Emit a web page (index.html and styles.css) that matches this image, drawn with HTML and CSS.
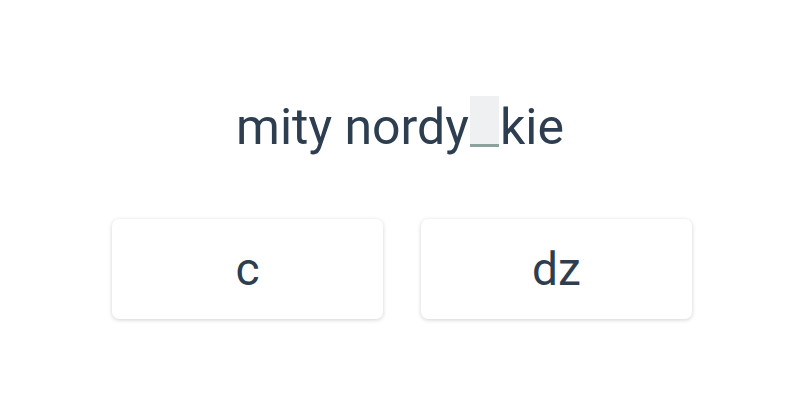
FILE: index.html
```html
<!DOCTYPE html>
<html>
<head>
<meta charset="utf-8">
<link rel="stylesheet" href="styles.css">
</head>
<body>
<div class="app">
  <h1 class="word">mity nordy<span class="blank"></span>kie</h1>
  <div class="options">
    <button class="option">c</button>
    <button class="option">dz</button>
  </div>
</div>
</body>
</html>
```
FILE: styles.css
```css
html, body {
  margin: 0;
  padding: 0;
  background: #ffffff;
}
.app {
  width: 800px;
  height: 400px;
  font-family: Roboto, "Noto Sans", sans-serif;
  color: #2c3e50;
  display: flex;
  flex-direction: column;
  align-items: center;
  padding-top: 96px;
  box-sizing: border-box;
}
.word {
  margin: 0;
  font-size: 50px;
  font-weight: 400;
  line-height: 60px;
  height: 60px;
  white-space: nowrap;
}
.blank {
  display: inline-block;
  width: 29px;
  height: 48px;
  background: #eef0f1;
  border-bottom: 3px solid #8ba39c;
  vertical-align: -3px;
  margin: 0 1px;
}
.options {
  display: flex;
  gap: 38px;
  margin-top: 63px;
  margin-left: 4px;
}
.option {
  width: 271px;
  height: 100px;
  background: #ffffff;
  border: none;
  border-radius: 7px;
  box-shadow: 0 1px 4px rgba(0, 0, 0, 0.18);
  font-family: Roboto, "Noto Sans", sans-serif;
  font-size: 46px;
  color: #2c3e50;
  padding: 0;
}
```
